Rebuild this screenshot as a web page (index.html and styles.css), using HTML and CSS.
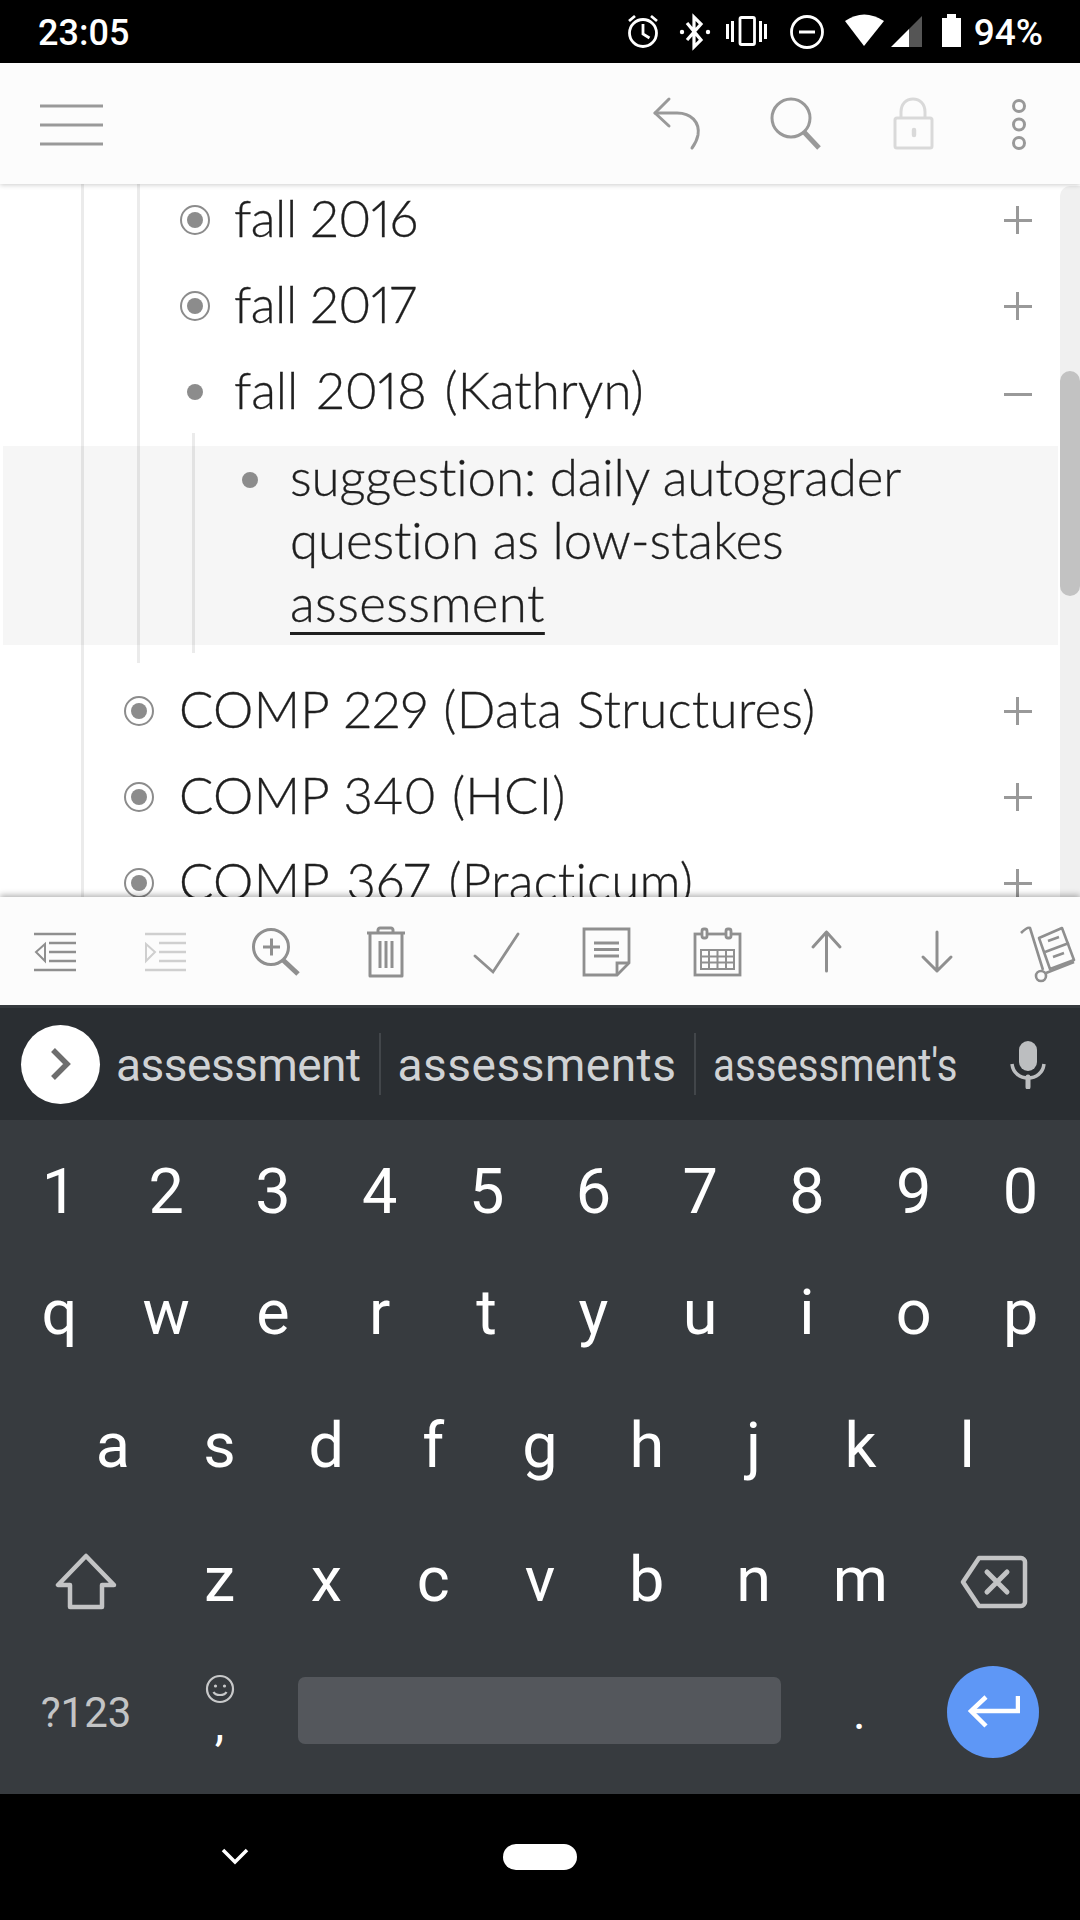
FILE: index.html
```html
<!DOCTYPE html>
<html lang="en">
<head>
  <meta charset="UTF-8" />
  <meta name="viewport" content="width=device-width, initial-scale=1.0">
  <title>Outline</title>
  <link rel="stylesheet" href="styles.css">
</head>

<body>
  <div class="screen">

    <!-- status bar -->
    <div class="status-bar">
      <span class="clock">23:05</span>
      <div class="status-right">
        <svg width="340" height="63" viewBox="625 0 340 63">
          <g fill="none" stroke="#fff" stroke-width="2.8">
            <circle cx="643" cy="33" r="13.5" />
            <path d="M643 24v10l6.5 4" />
            <path d="M629 21l6-5M657 21l-6-5" />
            <rect x="740" y="17.5" width="14.5" height="27" rx="1.5" />
            <circle cx="807" cy="32" r="15.5" />
            <path d="M799 32h16" stroke-width="3" />
            <path d="M687 23l14 17-7 7V17l7 7-14 16" stroke-width="3.2" />
          </g>
          <g fill="#fff">
            <circle cx="682" cy="32" r="2.2" />
            <circle cx="708" cy="32" r="2.2" />
            <rect x="726" y="24" width="3" height="15" />
            <rect x="731" y="21" width="3" height="21" />
            <rect x="759" y="21" width="3" height="21" />
            <rect x="764" y="24" width="3" height="15" />
            <path d="M845 21Q864 8 884 21L864 46Z" />
            <path d="M891 47L909 29V47Z" />
            <path d="M942 18h5v-4h9v4h5v29h-19Z" />
          </g>
          <path d="M909 47V29L922 16V47Z" fill="#555" />
        </svg>
        <span class="battery-level">94%</span>
      </div>
    </div>

    <!-- top toolbar -->
    <div class="top-bar">
      <svg width="76" height="64" viewBox="32 92 76 64">
        <path d="M40 106h63M40 125h63M40 144h63" stroke="#999" stroke-width="3" />
      </svg>
      <div class="top-actions">
        <svg class="undo-icon" width="70" height="64" viewBox="640 92 70 64" fill="none" stroke="#999" stroke-width="3" stroke-linecap="round" stroke-linejoin="round">
          <path d="M669 99L655 113l14 13" />
          <path d="M655 113h22c14 0 23 9 21 22-1 5-3 9-6 13" />
        </svg>
        <svg class="search-icon" width="80" height="64" viewBox="750 92 80 64" fill="none" stroke="#999">
          <circle cx="791" cy="118" r="19" stroke-width="3" />
          <path d="M804 132l15 16" stroke-width="5" />
        </svg>
        <svg class="lock-icon" width="60" height="64" viewBox="880 92 60 64" fill="none" stroke="#d9d9d9" stroke-width="3">
          <rect x="895" y="118" width="37" height="30" rx="2" />
          <path d="M901 118v-6c0-8 5-13 12-13s12 5 12 13v6" />
          <path d="M914 130v5" stroke-width="4.5" stroke-linecap="round" />
        </svg>
        <svg class="dots-icon" width="60" height="64" viewBox="990 92 60 64" fill="none" stroke="#999" stroke-width="3">
          <circle cx="1019" cy="106" r="5.5" />
          <circle cx="1019" cy="124.5" r="5.5" />
          <circle cx="1019" cy="143" r="5.5" />
        </svg>
      </div>
    </div>

    <!-- outline -->
    <div class="outline-wrap">
      <div class="outline">
        <div class="guide guide-one"></div>
        <div class="guide guide-two"></div>
        <div class="guide guide-three"></div>

        <div class="rows">
          <div class="row level-two">
            <span class="bullet closed"></span>
            <span class="row-text short">fall 2016</span>
            <span class="toggle plus"></span>
          </div>
          <div class="row level-two">
            <span class="bullet closed"></span>
            <span class="row-text short">fall 2017</span>
            <span class="toggle plus"></span>
          </div>
          <div class="row level-two">
            <span class="bullet"></span>
            <span class="row-text spaced">fall 2018 (Kathryn)</span>
            <span class="toggle minus"></span>
          </div>
          <div class="row-focus">
            <span class="bullet"></span>
            <span class="row-text">suggestion: daily autograder<br>question as low-stakes<br><u>assessment</u></span>
          </div>
          <div class="row level-one">
            <span class="bullet closed"></span>
            <span class="row-text">COMP 229 (Data Structures)</span>
            <span class="toggle plus"></span>
          </div>
          <div class="row level-one">
            <span class="bullet closed"></span>
            <span class="row-text">COMP 340 (HCI)</span>
            <span class="toggle plus"></span>
          </div>
          <div class="row level-one">
            <span class="bullet closed"></span>
            <span class="row-text spaced">COMP 367 (Practicum)</span>
            <span class="toggle plus"></span>
          </div>
        </div>
      </div>
      <div class="scrollbar"><div class="scroll-thumb"></div></div>
    </div>

    <!-- editing toolbar -->
    <div class="edit-bar">
      <svg width="107" height="64" viewBox="0 921 107 64" fill="none" stroke="#8f8f8f" stroke-width="2.6">
        <path d="M34 934h42M49 943h27M49 952h27M49 961h27M34 970h42" />
        <path d="M45 944L36 952l9 9Z" stroke-width="2" />
      </svg>
      <svg width="107" height="64" viewBox="107 921 107 64" fill="none" stroke="#cfcfcf" stroke-width="2.6">
        <path d="M145 934h41M159 943h27M159 952h27M159 961h27M145 970h41" />
        <path d="M146 944l9 8-9 9Z" stroke-width="2" />
      </svg>
      <svg width="106" height="64" viewBox="214 921 106 64" fill="none" stroke="#8f8f8f" stroke-width="3">
        <circle cx="271" cy="947" r="17.5" />
        <path d="M263 947h17M271.500 938.500v17" />
        <path d="M283 960l15 14" stroke-width="5" />
      </svg>
      <svg width="107" height="64" viewBox="320 921 107 64" fill="none" stroke="#8f8f8f" stroke-width="3" stroke-linejoin="round">
        <path d="M367 933h38" />
        <path d="M378 933v-3c0-1 1-2 2-2h11c1 0 2 1 2 2v3" />
        <path d="M370 933v43h32v-43" />
        <path d="M380 941v27M386 941v27M392 941v27" />
      </svg>
      <svg width="107" height="64" viewBox="427 921 107 64" fill="none" stroke="#8f8f8f" stroke-width="2.8" stroke-linecap="round">
        <path d="M475 956l18 16 25-38" />
      </svg>
      <svg width="126" height="64" viewBox="534 921 126 64" fill="none" stroke="#8f8f8f" stroke-width="2.8">
        <path d="M584 929h45v34l-12 12h-33Z" />
        <path d="M629 963h-12v12" />
        <path d="M594 943h25M594 949.500h25M594 956h25" />
      </svg>
      <svg width="110" height="64" viewBox="660 921 110 64" fill="none" stroke="#8f8f8f" stroke-width="2.8">
        <rect x="695" y="934" width="45" height="41" />
        <rect x="702" y="929" width="5" height="9" rx="2" fill="#fcfcfc" />
        <rect x="726" y="929" width="5" height="9" rx="2" fill="#fcfcfc" />
        <g stroke-width="2">
          <rect x="701" y="950" width="33" height="19" />
          <path d="M701 956.500h33M701 962.500h33M709 950v19M717.500 950v19M726 950v19" />
        </g>
      </svg>
      <svg width="110" height="64" viewBox="770 921 110 64" fill="none" stroke="#8f8f8f" stroke-width="3" stroke-linecap="round" stroke-linejoin="round">
        <path d="M826.500 971v-39M813 947l13.500-15 13.500 15" />
      </svg>
      <svg width="110" height="64" viewBox="880 921 110 64" fill="none" stroke="#8f8f8f" stroke-width="3" stroke-linecap="round" stroke-linejoin="round">
        <path d="M937 932v39M923 957l14 14 14-14" />
      </svg>
      <svg width="90" height="64" viewBox="990 921 90 64" fill="none" stroke="#8f8f8f" stroke-width="2.6" stroke-linejoin="round">
        <path d="M1021 933c3-3 7-6 9-5l13 42" />
        <circle cx="1041" cy="976" r="5" />
        <path d="M1046 973l28-11" />
        <path d="M1039 938l23-10 12 32-24 9Z" />
        <path d="M1045 952l24-9" />
        <path d="M1048 941l11-4M1053 957l11-4" />
      </svg>
    </div>

    <!-- suggestion strip -->
    <div class="suggest-bar">
      <div class="suggest-arrow">
        <svg width="30" height="36" viewBox="0 0 30 36" fill="none" stroke="#6d6d6d" stroke-width="5.500">
          <path d="M7 4l14 14L7 32" />
        </svg>
      </div>
      <span class="suggest first">assessment</span>
      <span class="suggest-divider"></span>
      <span class="suggest second">assessments</span>
      <span class="suggest-divider"></span>
      <span class="suggest third">assessment's</span>
      <svg class="mic-icon" width="36" height="50" viewBox="0 0 36 50" fill="none" stroke="#bcbec0">
        <rect x="9" y="2" width="18" height="30" rx="9" fill="#bcbec0" stroke="none" />
        <path d="M2 25c1 9 8 14 16 14s15-5 16-14" stroke-width="3.500" />
        <path d="M18 38v10" stroke-width="5" stroke-linecap="round" />
      </svg>
    </div>

    <!-- keyboard -->
    <div class="keyboard">
      <div class="key-row digits">
        <span class="key">1</span><span class="key">2</span><span class="key">3</span><span class="key">4</span><span class="key">5</span><span class="key">6</span><span class="key">7</span><span class="key">8</span><span class="key">9</span><span class="key">0</span>
      </div>
      <div class="key-row">
        <span class="key">q</span><span class="key">w</span><span class="key">e</span><span class="key">r</span><span class="key">t</span><span class="key">y</span><span class="key">u</span><span class="key">i</span><span class="key">o</span><span class="key">p</span>
      </div>
      <div class="key-row inset">
        <span class="key">a</span><span class="key">s</span><span class="key">d</span><span class="key">f</span><span class="key">g</span><span class="key">h</span><span class="key">j</span><span class="key">k</span><span class="key">l</span>
      </div>
      <div class="key-row letters-low">
        <span class="key wide icon-key">
          <svg width="62" height="60" viewBox="0 0 62 60" fill="none" stroke="#c3c4c5" stroke-width="4.500" stroke-linejoin="round">
            <path d="M31 4L3 33h12v22h32V33h12Z" />
          </svg>
        </span>
        <span class="key">z</span><span class="key">x</span><span class="key">c</span><span class="key">v</span><span class="key">b</span><span class="key">n</span><span class="key">m</span>
        <span class="key wide icon-key">
          <svg width="68" height="54" viewBox="0 0 68 54" fill="none" stroke="#c3c4c5" stroke-width="4.500" stroke-linejoin="round">
            <path d="M19 3h42c2 0 4 2 4 4v40c0 2-2 4-4 4H19L3 27Z" />
            <path d="M27 17l20 20M47 17L27 37" stroke-width="5" stroke-linecap="round" />
          </svg>
        </span>
      </div>
      <div class="key-row">
        <span class="key wide symbols">?123</span>
        <span class="key comma">
          <svg width="30" height="30" viewBox="0 0 30 30" fill="none" stroke="#c8c9ca" stroke-width="2.200">
            <circle cx="15" cy="15" r="13" />
            <circle cx="10.500" cy="12" r="1.600" fill="#c8c9ca" stroke="none" />
            <circle cx="19.500" cy="12" r="1.600" fill="#c8c9ca" stroke="none" />
            <path d="M8.500 18c2 4 11 4 13 0" />
          </svg>
          <span class="comma-mark">,</span>
        </span>
        <span class="key space-key"><span class="space-bar"></span></span>
        <span class="key period">.</span>
        <span class="key wide">
          <span class="enter-key">
            <svg width="54" height="36" viewBox="0 0 54 36" fill="none" stroke="#fff" stroke-width="4.500">
              <path d="M52 2v15H5" />
              <path d="M20 3L5 17l15 15" />
            </svg>
          </span>
        </span>
      </div>
    </div>

    <!-- android nav -->
    <div class="nav-bar">
      <svg class="nav-back" width="30" height="20" viewBox="0 0 30 20" fill="none" stroke="#fff" stroke-width="3.500">
        <path d="M3 3l12 12L27 3" />
      </svg>
      <span class="home-pill"></span>
    </div>

  </div>
</body>
</html>
```

FILE: styles.css
```css
body {
  margin: 0;
  padding: 0;
  background-color: black;
  font-family: Roboto, sans-serif;
}

svg {
  display: block;
  flex-shrink: 0;
}

.screen {
  width: 1080px;
  height: 1920px;
  display: flex;
  flex-direction: column;
  overflow: hidden;
}

/* status bar */

.status-bar {
  height: 63px;
  display: flex;
  justify-content: space-between;
  align-items: center;
  padding: 2px 38px 0;
  box-sizing: border-box;
  background-color: black;
  color: white;
  font-weight: 500;
  font-size: 36px;
}

.status-right {
  display: flex;
  align-items: center;
  margin-right: -1px;
}

.status-right svg {
  margin-top: -2px;
}

.battery-level {
  margin-left: 9px;
  font-size: 37px;
}

/* top toolbar */

.top-bar {
  height: 121px;
  flex-shrink: 0;
  display: flex;
  justify-content: space-between;
  padding: 29px 30px 0 32px;
  box-sizing: border-box;
  background-color: #fcfcfc;
  box-shadow: 0 1px 5px rgba(0, 0, 0, 0.2);
  position: relative;
  z-index: 2;
}

.top-actions {
  display: flex;
}

.search-icon {
  margin-left: 40px;
}

.lock-icon,
.dots-icon {
  margin-left: 50px;
}

/* outline */

.outline-wrap {
  height: 713px;
  flex-shrink: 0;
  display: flex;
  background-color: white;
}

.outline {
  flex: 1;
  position: relative;
  overflow: hidden;
}

.guide {
  position: absolute;
  width: 3px;
  background-color: rgba(0, 0, 0, 0.08);
}

.guide-one {
  left: 81px;
  top: 0;
  bottom: 0;
}

.guide-two {
  left: 137px;
  top: 0;
  height: 479px;
}

.guide-three {
  left: 192px;
  top: 249px;
  height: 220px;
}

.rows {
  margin-top: -7px;
  font-family: Lato, sans-serif;
  font-weight: 300;
  font-size: 51px;
  font-variant-ligatures: none;
  font-variant-numeric: proportional-nums;
  -webkit-text-stroke: 0.3px #1f1f1f;
  color: #1f1f1f;
}

.row {
  height: 86px;
  display: flex;
  align-items: center;
  padding-right: 28px;
}

.row .row-text {
  margin-bottom: 6px;
}

.level-one {
  padding-left: 123px;
}

.level-one .row-text {
  letter-spacing: 0.2px;
  word-spacing: 1px;
}

.level-two {
  padding-left: 179px;
}

.level-two .row-text {
  margin-left: 23px;
}

.row .row-text.short {
  letter-spacing: -0.4px;
}

.row .row-text.spaced {
  word-spacing: 4px;
}

.row-focus {
  display: flex;
  height: 199px;
  box-sizing: border-box;
  margin: 11px 2px 23px 3px;
  padding: 2px 0 0 231px;
  background-color: #f6f6f6;
  line-height: 63px;
}

.row-focus .bullet {
  margin-top: 16px;
}

.row-focus .row-text {
  margin-top: -3px;
  letter-spacing: -0.1px;
}

.row-focus u {
  letter-spacing: 0.4px;
  text-decoration-thickness: 2.5px;
  text-underline-offset: 10px;
}

.row-text {
  margin-left: 24px;
  white-space: nowrap;
}

.bullet {
  width: 32px;
  height: 32px;
  box-sizing: border-box;
  flex-shrink: 0;
  position: relative;
}

.bullet::after {
  content: "";
  position: absolute;
  left: 8px;
  top: 8px;
  width: 16px;
  height: 16px;
  border-radius: 50%;
  background-color: #8c8c8c;
}

.bullet.closed {
  border: 2.5px solid #8c8c8c;
  border-radius: 50%;
  width: 30px;
  height: 30px;
}

.bullet.closed::after {
  left: 5px;
  top: 5px;
}

.level-one .bullet.closed,
.level-two .bullet.closed {
  margin-left: 1px;
  margin-right: 1px;
}

.toggle {
  margin-left: auto;
  width: 28px;
  height: 28px;
  flex-shrink: 0;
  background-image: linear-gradient(#999, #999);
  background-repeat: no-repeat;
  background-position: center;
  background-size: 28px 3px;
  position: relative;
}

.toggle.minus {
  margin-top: 4px;
}

.toggle.plus::after {
  content: "";
  position: absolute;
  left: 12px;
  top: 0;
  width: 3px;
  height: 28px;
  background-color: #999;
}

.scrollbar {
  width: 20px;
  margin-top: 2px;
  background-color: #f0f0f0;
  border-radius: 10px 0 0 0;
}

.scroll-thumb {
  margin-top: 185px;
  height: 225px;
  border-radius: 10px;
  background-color: #c2c2c2;
}

/* editing toolbar */

.edit-bar {
  height: 108px;
  flex-shrink: 0;
  display: flex;
  padding-top: 24px;
  box-sizing: border-box;
  background-color: #fcfcfc;
  box-shadow: 0 -2px 6px rgba(0, 0, 0, 0.3);
  position: relative;
  z-index: 2;
}

/* suggestion strip */

.suggest-bar {
  height: 115px;
  flex-shrink: 0;
  display: flex;
  align-items: center;
  box-sizing: border-box;
  border-top: 3px solid #363a3e;
  padding-left: 21px;
  background-color: #2a2e32;
  color: #d0d2d4;
  font-size: 46px;
  position: relative;
  z-index: 3;
}

.suggest-arrow {
  width: 79px;
  height: 79px;
  flex-shrink: 0;
  display: flex;
  align-items: center;
  justify-content: center;
  border-radius: 50%;
  background-color: white;
}

.suggest {
  white-space: nowrap;
  padding-top: 2px;
}

.suggest.first {
  margin-left: 16px;
  letter-spacing: -0.5px;
}

.suggest.second {
  margin-left: 17px;
  letter-spacing: 0.5px;
}

.suggest.third {
  margin-left: 17px;
  width: 242px;
  transform: scaleX(0.875);
  transform-origin: left;
}

.suggest-divider {
  width: 2px;
  height: 62px;
  margin-left: 18px;
  background-color: #42464a;
}

.mic-icon {
  margin-left: auto;
  margin-right: 34px;
}

/* keyboard */

.keyboard {
  height: 674px;
  flex-shrink: 0;
  box-sizing: border-box;
  padding: 16px 6px 0;
  background-color: #373b3f;
  color: white;
}

.key-row {
  height: 132px;
  display: flex;
}

.key-row.digits {
  height: 110px;
}

.key-row.inset {
  height: 134px;
  padding-left: 53.4px;
}

.key-row.letters-low {
  height: 134px;
}

.key {
  width: 106.8px;
  flex-shrink: 0;
  display: flex;
  align-items: center;
  justify-content: center;
  font-size: 63px;
}

.key.wide {
  width: 160.2px;
}

.key.icon-key {
  padding-top: 6px;
  box-sizing: border-box;
}

.key.symbols {
  font-size: 42px;
  color: #c3c4c5;
}

.key.comma {
  flex-direction: column;
  justify-content: flex-start;
  padding-top: 28px;
  box-sizing: border-box;
}

.comma-mark {
  font-size: 48px;
  line-height: 40px;
}

.key.space-key {
  width: 533px;
}

.space-bar {
  width: 483px;
  height: 67px;
  margin-bottom: 3px;
  border-radius: 7px;
  background-color: #54575c;
}

.key.period {
  font-size: 48px;
}

.enter-key {
  width: 92px;
  height: 92px;
  display: flex;
  align-items: center;
  justify-content: center;
  border-radius: 50%;
  background-color: #5e97f6;
}

/* android nav */

.nav-bar {
  flex: 1;
  display: flex;
  align-items: center;
  padding-left: 220px;
  background-color: black;
}

.home-pill {
  width: 74px;
  height: 26px;
  margin-left: 253px;
  border-radius: 13px;
  background-color: white;
}
```
